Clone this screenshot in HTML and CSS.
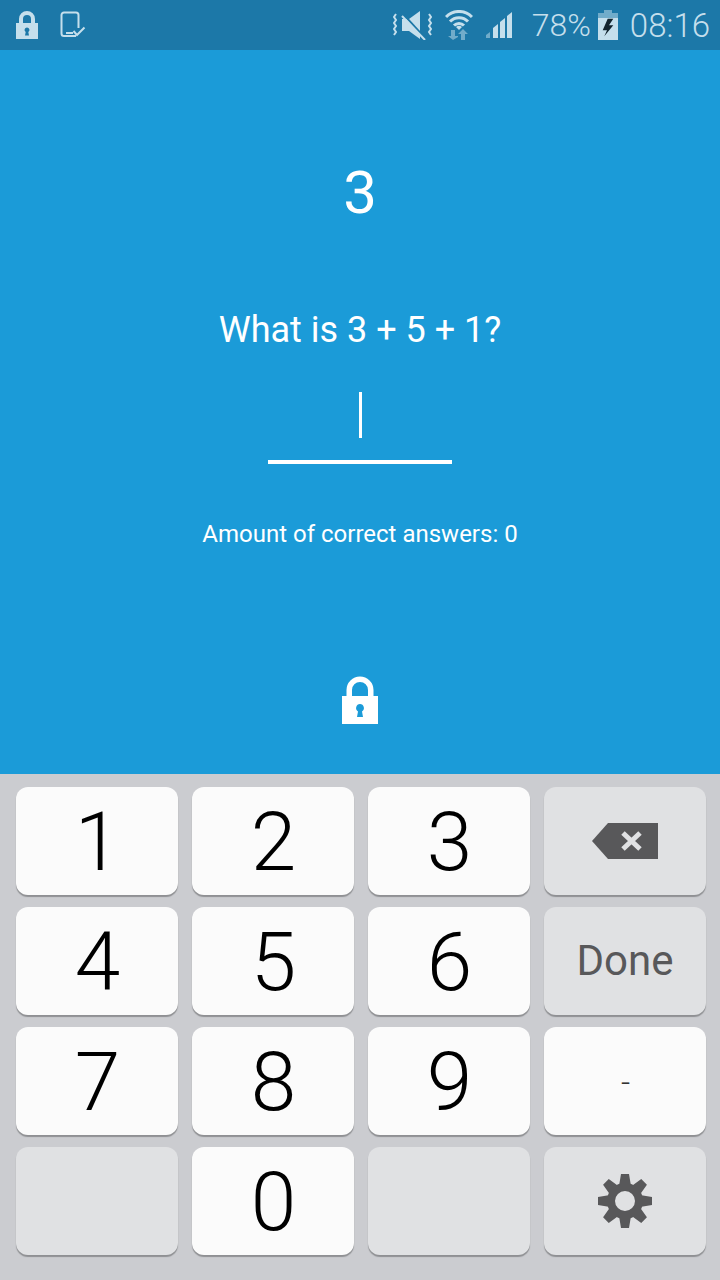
FILE: index.html
```html
<!DOCTYPE html>
<html lang="en">
<head>
    <meta charset="UTF-8">
    <meta name="viewport" content="width=device-width, initial-scale=1.0">
    <title>Math Lock</title>
    <link rel="stylesheet" href="styles.css">
</head>
<body>

    <div class="status-bar">
        <div class="status-left">
            <svg class="icon-lock-small" viewBox="0 0 24 32" width="24" height="32">
                <path fill-rule="evenodd" d="M1 14h3V10a8 8 0 0 1 16 0v4h3v16H1zM8 14h8V10a4 4 0 0 0-8 0zM12 18.500a2.500 2.500 0 0 0-1.300 4.600L10 26.500h4l-.7-3.400A2.500 2.500 0 0 0 12 18.500z"/>
            </svg>
            <svg class="icon-device" viewBox="0 0 28 28" width="28" height="28">
                <path d="M17 25H5a2.500 2.500 0 0 1-2.500-2.500V4A2.500 2.500 0 0 1 5 1.500h12A2.500 2.500 0 0 1 19.500 4v13" fill="none" stroke="currentColor" stroke-width="2"/>
                <path d="M7 22h7" fill="none" stroke="currentColor" stroke-width="2"/>
                <path d="M14.500 20l3.500 4 7.500-7.500" fill="none" stroke="currentColor" stroke-width="2"/>
            </svg>
        </div>
        <div class="status-right">
            <svg class="icon-mute" viewBox="0 0 40 30" width="40" height="30">
                <path d="M9 9h7l11-8v28L16 21H9z"/>
                <path d="M11 5l21 23" stroke="#1c78a8" stroke-width="2"/>
                <path d="M9 6l23 24" stroke="currentColor" stroke-width="2"/>
                <path d="M3 4L1 7l2 3-2 3 2 3-2 3 2 3-2 3M36 4l2 3-2 3 2 3-2 3 2 3-2 3 2 3" fill="none" stroke="currentColor" stroke-width="2"/>
            </svg>
            <svg class="icon-wifi" viewBox="0 0 28 30" width="28" height="30">
                <path d="M1 7a18 18 0 0 1 26 0M5 11.500a12.500 12.500 0 0 1 18 0M9 15.500a7 7 0 0 1 10 0" fill="none" stroke="currentColor" stroke-width="3"/>
                <path d="M14 20l-3-3a4.500 4.500 0 0 1 6 0z"/>
                <path class="dim" d="M6 20h4v6h3v1l-5 3-5-4h3zM16 30h4v-6h3l-5-5-5 5h3z"/>
            </svg>
            <svg class="icon-signal" viewBox="0 0 28 28" width="28" height="28">
                <path class="dim" d="M1 27v-3l4-3v6z"/>
                <path d="M8 27V17l5-4v14zM15 27V11l5-4v20zM22 27V5l5-4v26z"/>
            </svg>
            <span class="battery-pct">78%</span>
            <svg class="icon-battery" viewBox="0 0 20 30" width="20" height="30">
                <path class="dim" d="M6 0h8v3h6v5H0V3h6z"/>
                <path d="M0 8h20v22H0z"/>
                <path fill="#12242e" d="M9.700 8.700L4.700 20.300H9L6.300 26.300 15.300 15.300H11L15.300 8.700z"/>
            </svg>
            <span class="clock">08:16</span>
        </div>
    </div>

    <main class="challenge">
        <div class="countdown">3</div>
        <div class="question">What is 3 + 5 + 1?</div>
        <div class="answer-field"><span class="cursor"></span></div>
        <div class="score">Amount of correct answers: 0</div>
        <svg class="icon-lock" viewBox="0 0 36 48" width="36" height="48">
            <path fill-rule="evenodd" d="M0 20h4.500V14a13.500 13.500 0 0 1 27 0v6H36v28H0zM10 20h16V14a8 8 0 0 0-16 0zM18 28a4 4 0 0 0-2 7.400L15 41h6l-1-5.600A4 4 0 0 0 18 28z"/>
        </svg>
    </main>

    <section class="keypad">
        <button class="key">1</button>
        <button class="key">2</button>
        <button class="key">3</button>
        <button class="key key-fn">
            <svg viewBox="0 0 66 36" width="66" height="36">
                <path fill="#58585a" d="M16 0h50v36H16L0 18z"/>
                <path d="M31 10l17 16M48 10L31 26" stroke="#e0e1e3" stroke-width="5" fill="none"/>
            </svg>
        </button>
        <button class="key">4</button>
        <button class="key">5</button>
        <button class="key">6</button>
        <button class="key key-fn key-done">Done</button>
        <button class="key">7</button>
        <button class="key">8</button>
        <button class="key">9</button>
        <button class="key key-dash">-</button>
        <button class="key key-fn"></button>
        <button class="key">0</button>
        <button class="key key-fn"></button>
        <button class="key key-fn">
            <svg viewBox="0 0 54 54" width="54" height="54">
                <g fill="#58585a">
                    <path fill-rule="evenodd" d="M27 9a18 18 0 1 0 0 36a18 18 0 1 0 0-36zM27 17a10 10 0 1 1 0 20a10 10 0 1 1 0-20z"/>
                    <path d="M23 0h8l2 12H21zM23 54h8l2-12H21zM0 23v8l12 2V21zM54 23v8l-12 2V21z"/>
                    <path d="M23 0h8l2 12H21zM23 54h8l2-12H21zM0 23v8l12 2V21zM54 23v8l-12 2V21z" transform="rotate(45 27 27)"/>
                </g>
            </svg>
        </button>
    </section>

</body>
</html>
```

FILE: styles.css
```css
html, body {
    margin: 0;
    padding: 0;
}
body {
    width: 720px;
    height: 1280px;
    overflow: hidden;
    display: flex;
    flex-direction: column;
    font-family: 'Roboto', sans-serif;
    background-color: #1b9bd8;
}

/* status bar */
.status-bar {
    height: 50px;
    flex: none;
    display: flex;
    align-items: center;
    justify-content: space-between;
    padding: 0 10px 0 15px;
    background-color: #1c78a8;
    color: #c5dfec;
}
.status-bar svg {
    fill: currentColor;
    display: block;
}
.status-bar .dim {
    opacity: 0.5;
}
.status-left {
    display: flex;
    align-items: center;
    gap: 20px;
}
.status-right {
    display: flex;
    align-items: center;
    gap: 12px;
}
.battery-pct {
    font-size: 32px;
    font-weight: 300;
    margin-left: 7px;
    margin-right: -5px;
}
.clock {
    font-size: 33px;
    font-weight: 300;
}

/* challenge */
.challenge {
    height: 724px;
    flex: none;
    display: flex;
    flex-direction: column;
    align-items: center;
    color: #fff;
}
.countdown {
    margin-top: 108px;
    font-size: 60px;
    line-height: 70px;
}
.question {
    margin-top: 80px;
    font-size: 36px;
    line-height: 44px;
}
.answer-field {
    margin-top: 32px;
    width: 184px;
    height: 80px;
    display: flex;
    justify-content: center;
    align-items: flex-start;
    padding-top: 8px;
    padding-left: 1px;
    box-sizing: border-box;
    border-bottom: 4px solid #fff;
}
.cursor {
    width: 3px;
    height: 46px;
    background-color: #fff;
}
.score {
    margin-top: 53px;
    font-size: 24px;
    line-height: 34px;
}
.icon-lock {
    margin-top: 125px;
    fill: #fff;
}

/* keypad */
.keypad {
    flex: 1;
    display: grid;
    grid-template-columns: repeat(4, 162px);
    grid-auto-rows: 108px;
    column-gap: 14px;
    row-gap: 12px;
    padding: 13px 14px 0 16px;
    background-color: #cbccd0;
}
.key {
    display: flex;
    align-items: center;
    justify-content: center;
    padding: 2px 0 0 1px;
    border: none;
    border-radius: 12px;
    background-color: #fbfbfb;
    box-shadow: 0 2px 1px #8f9093;
    color: #000;
    font-family: inherit;
    font-size: 82px;
    font-weight: 300;
    line-height: 1;
}
.key-fn {
    padding: 0;
    background-color: #e0e1e3;
}
.key-done {
    font-size: 42px;
    font-weight: 400;
    color: #58585a;
}
.key-dash {
    font-size: 32px;
    color: #333;
}
```
